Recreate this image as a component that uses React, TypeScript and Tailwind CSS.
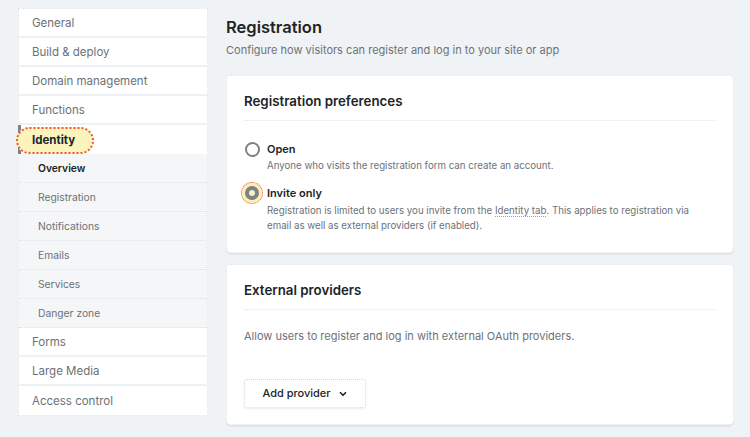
import { ChevronDown } from 'lucide-react'

const mainTop = ['General', 'Build & deploy', 'Domain management', 'Functions']
const subItems = ['Overview', 'Registration', 'Notifications', 'Emails', 'Services', 'Danger zone']
const mainBottom = ['Forms', 'Large Media', 'Access control']

function NavRow({ label, last }: { label: string; last?: boolean }) {
  return (
    <div
      className={`h-[29px] flex items-center pl-[13px] pt-[2px] bg-white text-[11.5px] text-[#6b7177] ${
        last ? '' : 'border-b-2 border-[#eef1f4]'
      }`}
    >
      {label}
    </div>
  )
}

function SubRow({ label, active }: { label: string; active?: boolean }) {
  return (
    <div
      className={`h-[29px] flex items-center pl-[19px] pt-[1px] bg-[#f5f6f7] border-b border-dotted border-[#dfe3e7] text-[10.3px] ${
        active ? 'text-[#202428] font-semibold' : 'text-[#6c7278]'
      }`}
    >
      {label}
    </div>
  )
}

function Radio({ checked }: { checked?: boolean }) {
  if (checked) {
    return (
      <div className="w-[22px] h-[22px] rounded-full border border-dotted border-[#f0553c] bg-[#fbf1b8] flex items-center justify-center">
        <div className="w-[14px] h-[14px] rounded-full bg-[#7c8287] flex items-center justify-center">
          <div className="w-[6px] h-[6px] rounded-full bg-[#f4f0c8]" />
        </div>
      </div>
    )
  }
  return <div className="w-[15px] h-[15px] rounded-full border-2 border-[#7c8287] bg-white" />
}

export default function App() {
  return (
    <div
      className="w-[750px] h-[437px] bg-[#f0f3f6] flex items-start pt-[8px] pl-[18px] pr-[16px] overflow-hidden"
      style={{ fontFamily: 'Inter, "Noto Sans", sans-serif' }}
    >
      {/* sidebar */}
      <nav className="w-[190px] shrink-0 border border-dotted border-[#dde2e6] bg-white">
        {mainTop.map((l) => (
          <NavRow key={l} label={l} />
        ))}
        <div className="relative h-[29px] flex items-center pl-[11px] pt-[2px] bg-white border-l-[3px] border-[#7c8287] -ml-[1px]">
          <div className="absolute left-[-5px] top-[2px] w-[78px] h-[27px] rounded-full bg-[#fbf4bd] border-2 border-dotted border-[#f0553c]" />
          <span className="relative text-[11.5px] font-bold text-[#202428]">Identity</span>
        </div>
        {subItems.map((l, i) => (
          <SubRow key={l} label={l} active={i === 0} />
        ))}
        {mainBottom.map((l, i) => (
          <NavRow key={l} label={l} last={i === mainBottom.length - 1} />
        ))}
      </nav>

      {/* main */}
      <main className="flex-1 ml-[18px] pt-[9px]">
        <h1 className="text-[16.5px] font-semibold text-[#202428] leading-[20px]">Registration</h1>
        <p className="mt-[5px] text-[11px] text-[#6c7278] leading-[16px]">
          Configure how visitors can register and log in to your site or app
        </p>

        <section className="mt-[17px] bg-white rounded-[5px] border border-dotted border-[#dde2e6] shadow-[0_2px_0_#e2e6ea] px-[17px] pt-[16px] pb-[19px]">
          <h2 className="text-[13.3px] font-semibold text-[#202428] leading-[18px]">Registration preferences</h2>
          <div className="mt-[10px] border-t border-dotted border-[#e3e6e9]" />

          <div className="mt-[20px] flex items-start">
            <div className="w-[23px] pl-[1px] pt-[1px]">
              <Radio />
            </div>
            <div>
              <div className="text-[11px] font-semibold text-[#202428] leading-[16px]">Open</div>
              <div className="mt-[1px] text-[9.7px] text-[#6c7278] leading-[15px]">
                Anyone who visits the registration form can create an account.
              </div>
            </div>
          </div>

          <div className="mt-[12px] flex items-start">
            <div className="w-[26px] -ml-[3px] -mt-[3px]">
              <Radio checked />
            </div>
            <div>
              <div className="text-[11px] font-semibold text-[#202428] leading-[16px]">Invite only</div>
              <div className="mt-[2px] text-[9.7px] text-[#6c7278] leading-[15px]">
                Registration is limited to users you invite from the{' '}
                <span className="border-b border-dotted border-[#9aa1a7]">Identity tab</span>. This applies to registration via
                <br />
                email as well as external providers (if enabled).
              </div>
            </div>
          </div>
        </section>

        <section className="mt-[11px] bg-white rounded-[5px] border border-dotted border-[#dde2e6] shadow-[0_2px_0_#e2e6ea] px-[17px] pt-[16px] pb-[16px]">
          <h2 className="text-[13.3px] font-semibold text-[#202428] leading-[18px]">External providers</h2>
          <div className="mt-[10px] border-t border-dotted border-[#e3e6e9]" />
          <p className="mt-[18px] text-[11px] text-[#6c7278] leading-[16px]">
            Allow users to register and log in with external OAuth providers.
          </p>
          <button className="mt-[35px] h-[29px] w-[122px] flex items-center justify-center gap-[7px] bg-white rounded-[3px] border border-dotted border-[#d5dade] shadow-[0_1px_2px_rgba(0,0,0,0.08)] text-[11px] font-medium text-[#202428]">
            Add provider
            <ChevronDown className="w-[10px] h-[10px]" strokeWidth={4} />
          </button>
        </section>
      </main>
    </div>
  )
}
